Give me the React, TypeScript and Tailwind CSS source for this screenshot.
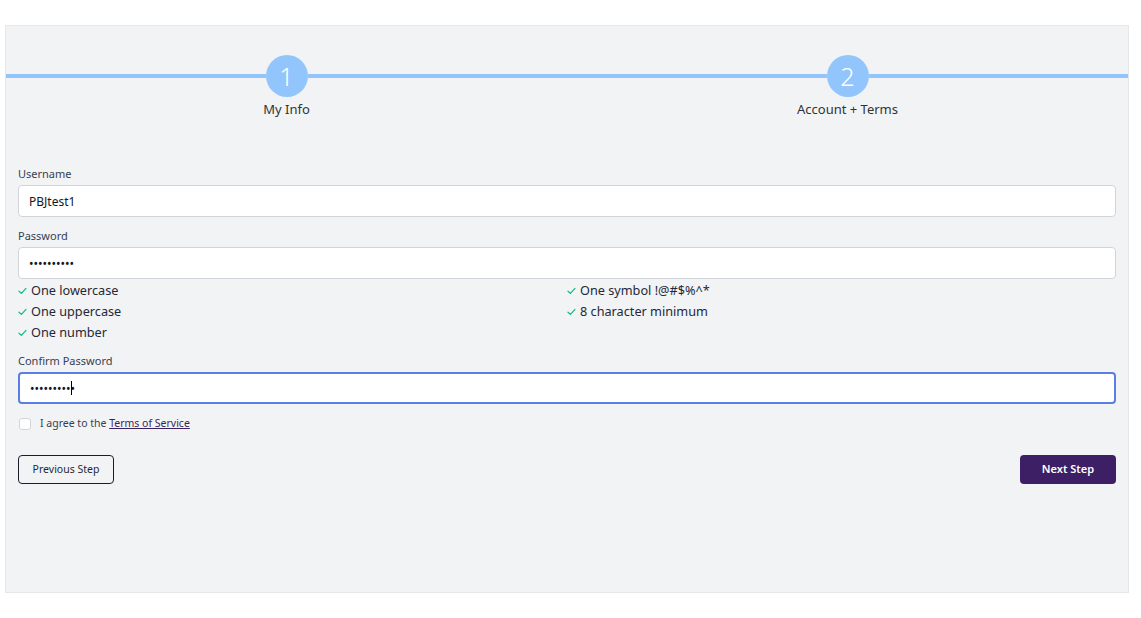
import { useState } from "react";

const FONT = "font-['Segoe_UI','Noto_Sans','Open_Sans',sans-serif]";

const steps = [
  { n: 1, label: "My Info" },
  { n: 2, label: "Account + Terms" },
];

const rules = [
  "One lowercase",
  "One symbol !@#$%^*",
  "One uppercase",
  "8 character minimum",
  "One number",
];

function CheckMark() {
  return (
    <svg width="9" height="8" viewBox="0 0 9 8" className="shrink-0 mr-[4px]">
      <path d="M1 4.2 L3.4 6.4 L8 1.4" fill="none" stroke="#10b981" strokeWidth="1.2" strokeLinecap="round" strokeLinejoin="round" />
    </svg>
  );
}

export default function App() {
  const [username, setUsername] = useState("PBJtest1");
  const [password, setPassword] = useState("Abcdef12!x");
  const [confirm, setConfirm] = useState("Abcdef12!x");
  const [agree, setAgree] = useState(false);

  return (
    <div className={`min-h-screen bg-white pt-[25px] pl-[5px] ${FONT}`}>
      <div className="w-[1124px] h-[568px] border border-[#e5e7eb] bg-[#f2f3f5]">
        {/* stepper */}
        <div className="grid grid-cols-2 pt-[29px]">
          {steps.map((s) => (
            <div key={s.n} className="flex flex-col items-center">
              <div className="flex items-center w-full">
                <div className="flex-1 h-[4px] bg-[#93c5fd]" />
                <div className="w-[42px] h-[42px] rounded-full bg-[#93c5fd] flex items-center justify-center text-white text-[25px] font-light leading-none">
                  {s.n}
                </div>
                <div className="flex-1 h-[4px] bg-[#93c5fd]" />
              </div>
              <div className="mt-[2px] text-[13px] leading-[20px] text-[#333]">{s.label}</div>
            </div>
          ))}
        </div>

        {/* account form */}
        <div className="px-[12px] pt-[47px]">
          <label className="block text-[11px] leading-[16px] text-[#374151] mb-[3px]">Username</label>
          <input
            value={username}
            onChange={(e) => setUsername(e.target.value)}
            className="w-full h-[32px] px-[10px] rounded-[4px] border border-[#d1d5db] bg-white text-[12px] text-[#111827] outline-none"
          />

          <label className="block text-[11px] leading-[16px] text-[#374151] mt-[11px] mb-[3px]">Password</label>
          <input
            type="password"
            value={password}
            onChange={(e) => setPassword(e.target.value)}
            className="w-full h-[32px] px-[10px] rounded-[4px] border border-[#d1d5db] bg-white text-[12px] text-[#111827] outline-none"
          />
          <div className="grid grid-cols-2 mt-[1px]">
            {rules.map((r) => (
              <div key={r} className="flex items-center h-[21px] text-[12.7px] text-[#1f2937]">
                <CheckMark />
                {r}
              </div>
            ))}
          </div>

          <label className="block text-[11px] leading-[16px] text-[#374151] mt-[10px] mb-[3px]">Confirm Password</label>
          <div className="relative">
            <input
              type="password"
              autoFocus
              value={confirm}
              onChange={(e) => setConfirm(e.target.value)}
              className="w-full h-[32px] px-[10px] rounded-[4px] border-2 border-[#5b7ee5] bg-white text-[12px] text-[#111827] outline-none caret-black"
            />
            {/* caret marker */}
            <span className="absolute left-[53px] top-[9px] w-[1px] h-[14px] bg-black pointer-events-none" />
          </div>

          <label className="flex items-center mt-[12px] h-[16px] text-[10.5px] text-[#374151]">
            <input
              type="checkbox"
              checked={agree}
              onChange={(e) => setAgree(e.target.checked)}
              className="appearance-none w-[12px] h-[12px] rounded-[3px] border border-[#d1d5db] bg-white mr-[9px] ml-[1px]"
            />
            I agree to the&nbsp;
            <a href="#" className="text-[#3b1f5e] underline">Terms of Service</a>
          </label>

          <div className="flex justify-between mt-[23px]">
            <button className="w-[96px] h-[29px] rounded-[4px] border border-[#1e1b2e] bg-transparent text-[10.5px] text-[#1f2937]">
              Previous Step
            </button>
            <button className="w-[96px] h-[29px] rounded-[4px] bg-[#3d1f66] text-[11px] font-semibold text-white">
              Next Step
            </button>
          </div>
        </div>
      </div>
    </div>
  );
}
